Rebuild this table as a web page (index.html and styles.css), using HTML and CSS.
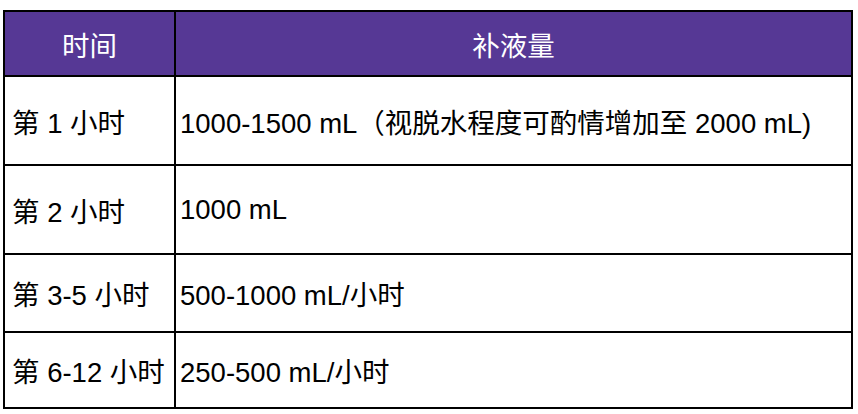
FILE: index.html
```html
<!DOCTYPE html>
<html lang="zh">
<head>
<meta charset="utf-8">
<link rel="stylesheet" href="styles.css">
</head>
<body>
<div class="page">
  <div class="grid">
    <div class="cell head">时间</div>
    <div class="cell head">补液量</div>
    <div class="cell c1 r-tall">第 1 小时</div>
    <div class="cell c2 r-tall">1000-1500 mL（视脱水程度可酌情增加至 2000 mL)</div>
    <div class="cell c1">第 2 小时</div>
    <div class="cell c2">1000 mL</div>
    <div class="cell c1">第 3-5 小时</div>
    <div class="cell c2">500-1000 mL/小时</div>
    <div class="cell c1">第 6-12 小时</div>
    <div class="cell c2">250-500 mL/小时</div>
  </div>
</div>
</body>
</html>
```

FILE: styles.css
```css
html, body {
  margin: 0;
  padding: 0;
  background: #ffffff;
}
.page {
  padding: 10px 0 0 3px;
}
.grid {
  width: 850px;
  box-sizing: border-box;
  display: grid;
  grid-template-columns: 169px 675px;
  grid-template-rows: 63px 87px 87px 76px 74px;
  gap: 2px;
  padding: 2px;
  background: #000;
  font-family: "Liberation Sans", Arial, "Noto Sans CJK SC", sans-serif;
  font-size: 27.5px;
  color: #000;
}
.cell {
  background: #fff;
  display: flex;
  align-items: center;
  white-space: nowrap;
}
.head {
  background: #563895;
  color: #fff;
  justify-content: center;
}
.c1 {
  padding-left: 7px;
}
.c2 {
  padding-left: 4px;
}
```
